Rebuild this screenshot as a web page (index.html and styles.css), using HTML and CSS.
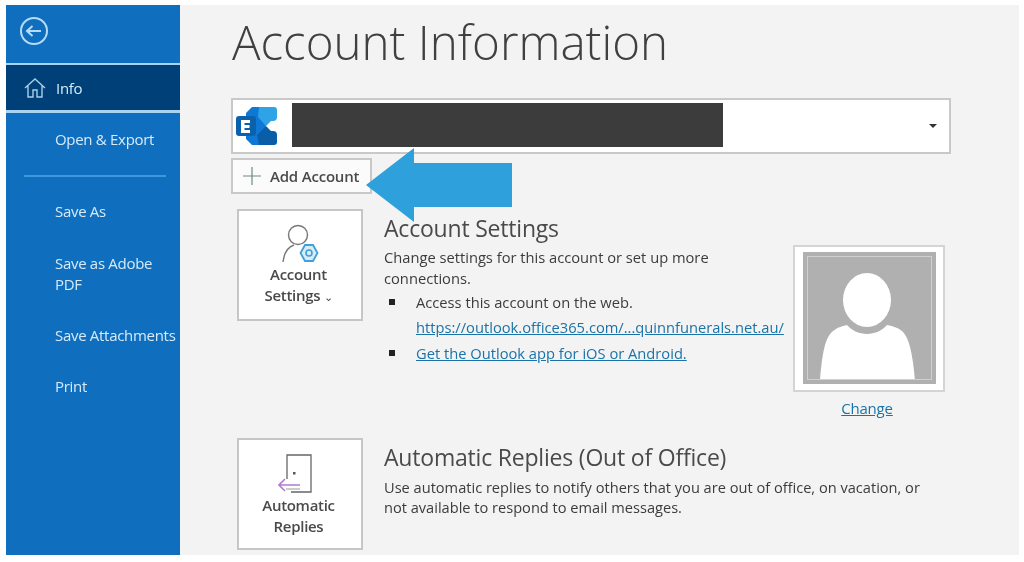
FILE: index.html
```html
<!DOCTYPE html>
<html lang="en">
<head>
<meta charset="utf-8">
<title>Account Information</title>
<link rel="stylesheet" href="styles.css">
</head>
<body>
<div class="app">
  <nav class="side">
    <div class="back">
      <svg class="back-icon" viewBox="0 0 30 30" width="30" height="30"><circle cx="15" cy="15" r="13" fill="none" stroke="#b5dcf5" stroke-width="2"/><path d="M22 15H8M13.500 10l-5.500 5 5.500 5" fill="none" stroke="#b5dcf5" stroke-width="2"/></svg>
    </div>
    <div class="info">
      <svg viewBox="0 0 24 24" width="24" height="24"><path d="M2 12 12 3l10 9M5 10v11h5v-7h4v7h5V10" fill="none" stroke="#a9cfe8" stroke-width="1.4"/></svg>
      <span>Info</span>
    </div>
    <div class="nav-item first">Open &amp; Export</div>
    <div class="nav-rule"></div>
    <div class="nav-item saveas">Save As</div>
    <div class="nav-item adobe">Save as Adobe PDF</div>
    <div class="nav-item attach">Save Attachments</div>
    <div class="nav-item print">Print</div>
  </nav>
  <main class="main">
    <h1>Account Information</h1>
    <div class="selector">
      <svg class="ex-logo" viewBox="0 0 44 44" width="44" height="44">
        <path d="M17 3h8l6 19-6 19h-8l-6-6V9z" fill="#0f78d4"/>
        <path d="M24 3h15a3 3 0 0 1 3 3v7a4 4 0 0 1-4 4h-2l-5 5-8-9z" fill="#2ea3e6"/>
        <path d="M31 22l5 5h2a4 4 0 0 1 4 4v7a3 3 0 0 1-3 3H24l-2-10z" fill="#0a5ea8"/>
        <rect x="1" y="12" width="20" height="20" rx="3" fill="#0a62ad"/>
        <path d="M6 16h9v3H9.500v2h5v3h-5v2H15v3H6z" fill="#fff"/>
      </svg>
      <div class="redact"></div>
      <span class="caret"></span>
    </div>
    <div class="add">
      <svg viewBox="0 0 20 20" width="20" height="20"><path d="M10 1v18M1 10h18" stroke="#6f8a7c" stroke-width="1.2"/></svg>
      <span>Add Account</span>
    </div>
    <section class="row settings">
      <div class="tile">
        <svg viewBox="0 0 44 44" width="44" height="44">
          <circle cx="20" cy="11" r="9.500" fill="none" stroke="#777" stroke-width="1.4"/>
          <path d="M5 38c1-9 5-15 11-17" fill="none" stroke="#777" stroke-width="1.4"/>
          <path d="M27 21h8l4.500 8-4.500 8h-8l-4.500-8z" fill="#d8ecf8" stroke="#3f9fd8" stroke-width="1.8"/>
          <circle cx="31" cy="29" r="3" fill="none" stroke="#3f9fd8" stroke-width="1.6"/>
        </svg>
        <span class="tile-label">Account<br>Settings <small>⌄</small></span>
      </div>
      <div class="copy">
        <h2>Account Settings</h2>
        <p>Change settings for this account or set up more<br>connections.</p>
        <ul>
          <li>Access this account on the web.<br><a href="#">https://outlook.office365.com/...quinnfunerals.net.au/</a></li>
          <li class="app-link"><a href="#">Get the Outlook app for iOS or Android.</a></li>
        </ul>
      </div>
      <div class="photo-col">
        <div class="photo">
          <div class="photo-in">
            <svg viewBox="0 0 133 132" preserveAspectRatio="none">
              <ellipse cx="64" cy="48" rx="24" ry="27" fill="#fff"/>
              <path d="M17 128c2-22 4-42 13-49 5-4 10-5 14-6 4 5 12 9 20 9s16-4 20-9c5 1 10 2 15 6 8 7 11 27 13 49z" fill="#fff"/>
            </svg>
          </div>
        </div>
        <a class="change" href="#">Change</a>
      </div>
    </section>
    <section class="row replies">
      <div class="tile">
        <svg viewBox="0 0 44 44" width="44" height="44">
          <path d="M9 26V2h24v37H13" fill="none" stroke="#666" stroke-width="1.3"/>
          <rect x="15" y="19" width="2.500" height="2.500" fill="#555"/>
          <path d="M22 32H1M7 26l-6 6 6 6" fill="none" stroke="#b57bd0" stroke-width="1.6"/>
          <path d="M8 36h14" stroke="#999" stroke-width="1"/>
        </svg>
        <span class="tile-label">Automatic<br>Replies</span>
      </div>
      <div class="copy">
        <h2>Automatic Replies (Out of Office)</h2>
        <p class="wide">Use automatic replies to notify others that you are out of office, on vacation, or<br>not available to respond to email messages.</p>
      </div>
    </section>
    <svg class="arrow" viewBox="0 0 146 74" width="146" height="74"><path d="M0 37 48 0v15h98v44H48v15z" fill="#2ea0dc"/></svg>
  </main>
</div>
</body>
</html>
```
FILE: styles.css
```css
* { box-sizing: border-box; }
html, body { margin: 0; height: 100%; background: #fff; overflow: hidden; }
body { font-family: "Open Sans", "Liberation Sans", sans-serif; color: #3c3c3c; }
.app { display: flex; width: 1012px; height: 550px; margin: 5px 6px 0; filter: blur(0.6px); }

.side { width: 174px; flex: none; background: #106ebe; color: #d6ebf8; font-size: 15px; overflow: hidden; }
.back { height: 58px; padding: 11px 0 0 13px; }
.back-icon { display: block; }
.info { height: 50px; display: flex; align-items: center; gap: 9px; padding-left: 17px; background: #004078; border-top: 2px solid #a9d3f0; border-bottom: 3px solid #a9d3f0; letter-spacing: -0.3px; }
.nav-item { padding-left: 49px; line-height: 21px; white-space: nowrap; letter-spacing: -0.3px; }
.first { margin-top: 16px; }
.nav-rule { height: 2px; margin: 25px 14px 0 18px; background: #3f97de; }
.saveas { margin-top: 24px; }
.adobe { margin-top: 31px; padding-right: 10px; white-space: normal; }
.attach { margin-top: 30px; }
.print { margin-top: 30px; }

.main { position: relative; flex: 1; background: #f3f3f3; padding: 0 68px 0 51px; }
h1 { margin: 6px 0 0 1px; font-weight: 300; font-size: 47.5px; line-height: 62px; color: #404040; white-space: nowrap; }
.selector { display: flex; align-items: center; width: 720px; height: 56px; margin-top: 25px; background: #fff; border: 2px solid #c9c9c9; padding: 0 12px 0 2px; }
.ex-logo { flex: none; margin-right: 13px; }
.redact { width: 431px; height: 44px; margin-top: -2px; background: #3c3c3c; }
.caret { margin-left: auto; border: 4px solid transparent; border-top: 4px solid #333; border-bottom: 0; }
.add { display: flex; align-items: center; gap: 8px; width: 141px; height: 36px; margin-top: 4px; padding-left: 9px; background: #fbfbfb; border: 2px solid #c9c9c9; font-size: 15px; font-weight: 600; color: #4a4a4a; letter-spacing: -0.2px; white-space: nowrap; }
.row { display: flex; }
.settings { margin: 15px 0 0 6px; height: 229px; }
.replies { margin: 0 0 0 6px; }
.tile { width: 126px; height: 112px; flex: none; display: flex; flex-direction: column; align-items: center; background: #fff; border: 2px solid #c6c6c6; padding-top: 13px; font-size: 15px; font-weight: 600; line-height: 21px; color: #4a4a4a; text-align: center; letter-spacing: -0.3px; }
.tile svg { flex: none; }
.tile-label { margin: -4px 3px 0 0; }
.replies .tile-label { margin-top: -2px; }
.tile small { font-size: 11px; font-weight: 400; }
.copy { margin-left: 21px; padding-top: 4px; width: 408px; font-size: 14.7px; line-height: 21px; flex: none; }
h2 { margin: 0; font-weight: 400; font-size: 23px; line-height: 30px; color: #4a4a4a; letter-spacing: -0.2px; white-space: nowrap; }
p { margin: 4px 0 0; white-space: nowrap; }
p.wide { margin-top: 5px; line-height: 20px; font-size: 14.6px; }
ul { list-style: none; margin: 1px 0 0; padding: 0 0 0 32px; }
li { position: relative; white-space: nowrap; line-height: 25px; }
li::before { content: ""; position: absolute; left: -27px; top: 9px; width: 6px; height: 6px; background: #222; }
.app-link { margin-top: 1px; }
a { color: #1a73a8; text-decoration: underline; }
.photo-col { margin: 36px 0 0 1px; width: 152px; flex: none; display: flex; flex-direction: column; align-items: center; }
.photo { width: 152px; height: 147px; padding: 5px 7px 6px 8px; background: #fff; border: 2px solid #d4d4d4; }
.photo-in { height: 100%; background: #b0b0b0; outline: 1px solid #d0d0d0; outline-offset: -5px; overflow: hidden; }
.photo-in svg { display: block; width: 100%; height: 100%; }
.change { margin: 6px 4px 0 0; font-size: 15px; line-height: 20px; letter-spacing: -0.2px; }
.arrow { position: absolute; left: 186px; top: 143px; }
```
